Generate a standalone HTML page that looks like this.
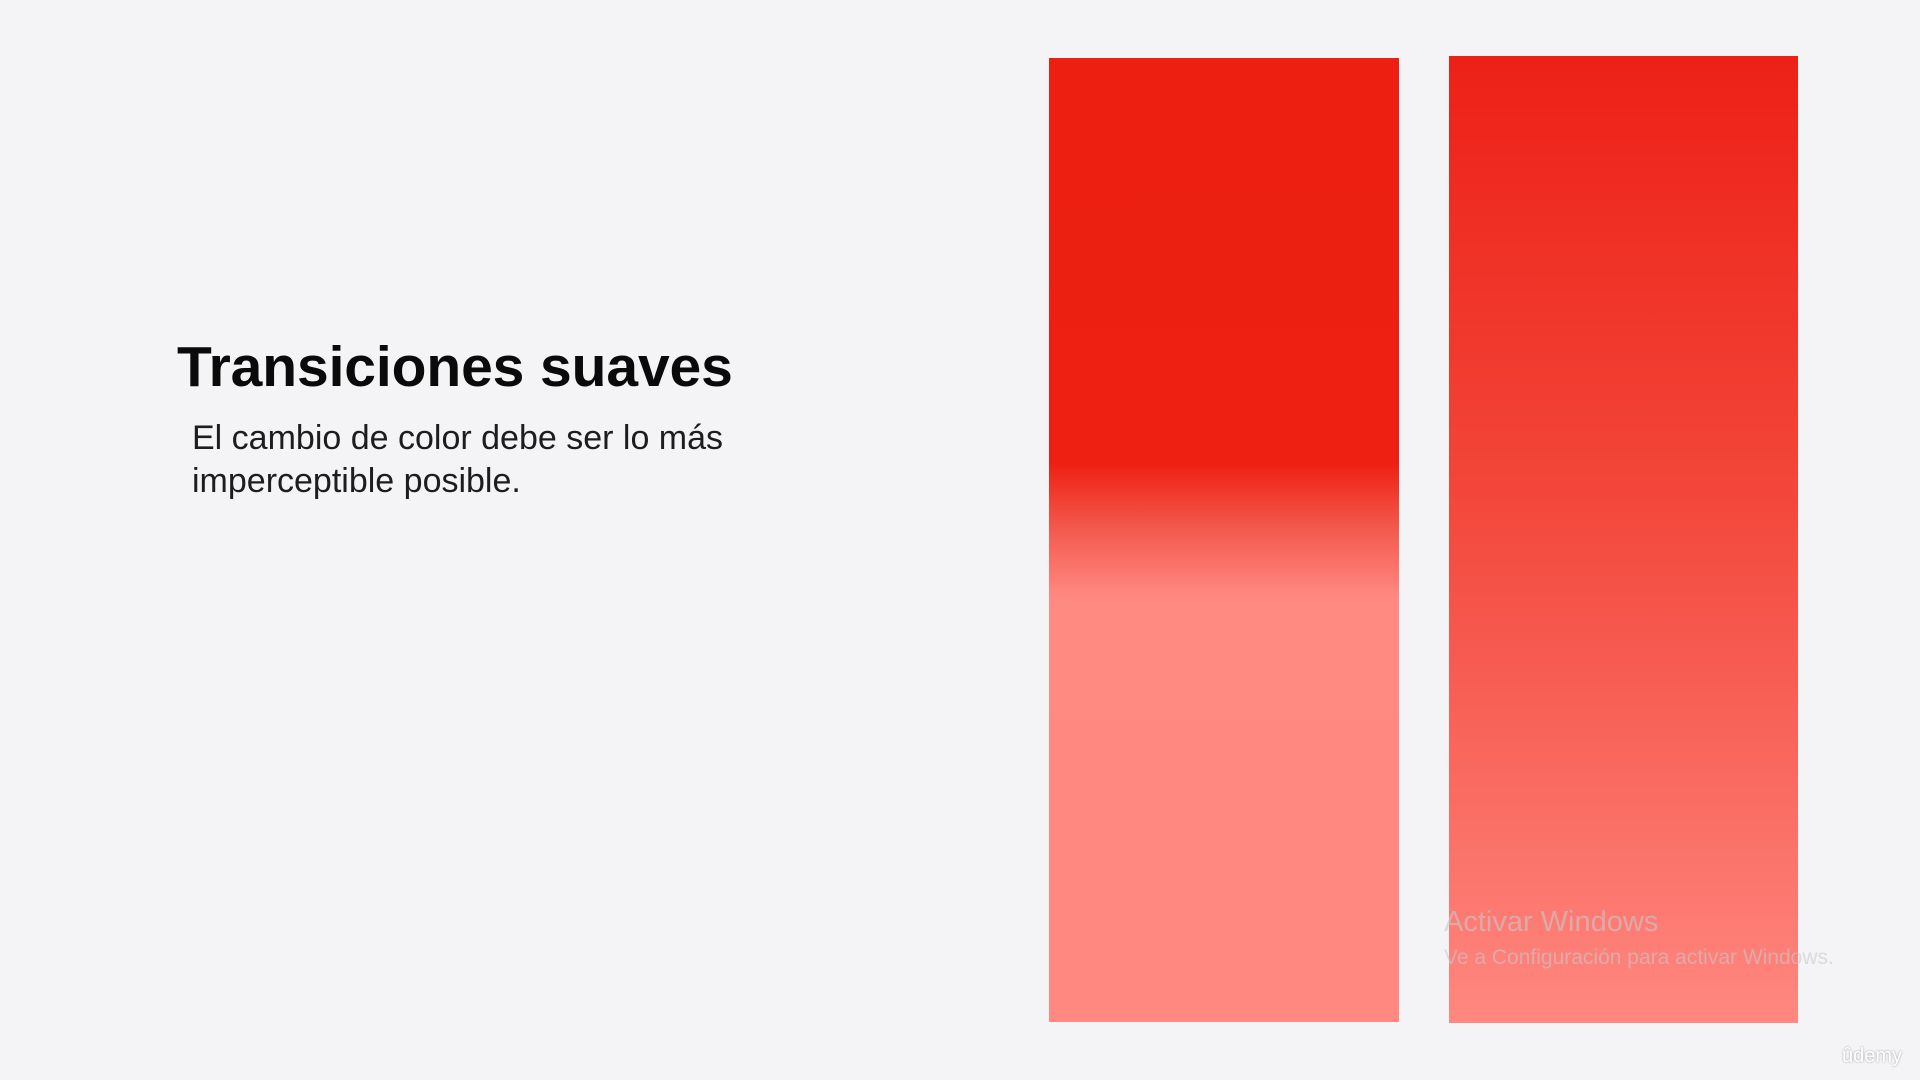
<!DOCTYPE html>
<html><head><meta charset="utf-8"><style>
html,body{margin:0;padding:0;width:1920px;height:1080px;overflow:hidden;background:#f4f4f6;font-family:"Liberation Sans",sans-serif;}
.t{position:absolute;left:177px;top:334px;font-size:57px;font-weight:bold;color:#0a0a0a;letter-spacing:-0.1px;}
.s{position:absolute;left:192px;top:417px;font-size:34px;line-height:43px;color:#1d1d1f;}
.b1{position:absolute;left:1049px;top:58px;width:350px;height:964px;background:linear-gradient(#ec1f10 0%,#ed2012 42%,#f45a4f 49%,#ff8a82 56%,#ff8880 100%);}
.b2{position:absolute;left:1449px;top:56px;width:349px;height:967px;background:linear-gradient(#ed2016 0%,#f3463a 45%,#ff8880 100%);}
.w1{position:absolute;left:1444px;top:906px;font-size:29px;color:rgba(200,200,205,.6);}
.w2{position:absolute;left:1444px;top:946px;font-size:21px;color:rgba(200,200,205,.6);}
.u{position:absolute;left:1842px;top:1045px;font-size:20px;color:#fff;text-shadow:0 0 2px #999;}
</style></head><body>
<div class="t">Transiciones suaves</div>
<div class="s">El cambio de color debe ser lo más<br>imperceptible posible.</div>
<div class="b1"></div>
<div class="b2"></div>
<div class="w1">Activar Windows</div>
<div class="w2">Ve a Configuración para activar Windows.</div>
<div class="u">ûdemy</div>
</body></html>
